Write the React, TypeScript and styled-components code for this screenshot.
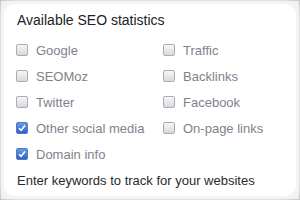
import React from 'react'
import styled, { createGlobalStyle } from 'styled-components'

const GlobalStyle = createGlobalStyle`
  html, body {
    margin: 0;
    padding: 0;
    background: #fff;
  }
  body {
    font-family: "Liberation Sans", Arial, sans-serif;
  }
`

const options = [
  { label: 'Google', checked: false },
  { label: 'Traffic', checked: false },
  { label: 'SEOMoz', checked: false },
  { label: 'Backlinks', checked: false },
  { label: 'Twitter', checked: false },
  { label: 'Facebook', checked: false },
  { label: 'Other social media', checked: true },
  { label: 'On-page links', checked: false },
  { label: 'Domain info', checked: true },
]

const App: React.FC = () => {
  return (
    <>
      <GlobalStyle />
      <StyledFrame>
        <StyledPanel>
          <StyledTitle>Available SEO statistics</StyledTitle>
          <StyledGrid>
            {options.map(opt => (
              <StyledOption key={opt.label}>
                <StyledBox checked={opt.checked}>
                  {opt.checked && (
                    <svg width="8" height="8" viewBox="0 0 8 8">
                      <path
                        d="M1 4.2 L3.1 6.3 L7 1.5"
                        fill="none"
                        stroke="#fff"
                        strokeWidth="1.6"
                      />
                    </svg>
                  )}
                </StyledBox>
                <StyledLabel>{opt.label}</StyledLabel>
              </StyledOption>
            ))}
          </StyledGrid>
          <StyledFooter>Enter keywords to track for your websites</StyledFooter>
        </StyledPanel>
      </StyledFrame>
    </>
  )
}

const StyledFrame = styled.div`
  box-sizing: border-box;
  width: 300px;
  height: 200px;
  border: 1px solid #c2c2c2;
  background: #ededed;
  padding: 3px;
`

const StyledPanel = styled.div`
  box-sizing: border-box;
  height: 100%;
  background: #fff;
  border-radius: 12px;
  box-shadow: 0 0 10px 4px #f7f7f7;
  padding: 6px 0 0 12px;
`

const StyledTitle = styled.div`
  font-size: 14px;
  line-height: 20px;
  color: #222;
  margin-left: 1px;
`

const StyledGrid = styled.div`
  display: grid;
  grid-template-columns: 147px 1fr;
  grid-auto-rows: 26px;
  margin-top: 7px;
`

const StyledOption = styled.div`
  display: flex;
  align-items: center;
`

const StyledBox = styled.span<{ checked: boolean }>`
  box-sizing: border-box;
  width: 12px;
  height: 12px;
  border-radius: 2px;
  display: flex;
  align-items: center;
  justify-content: center;
  border: 1px solid ${props => (props.checked ? '#4c78c4' : '#a9acb2')};
  background: ${props =>
    props.checked
      ? 'linear-gradient(#6b9ae4, #2f62c6)'
      : 'linear-gradient(#f6f6f6, #d8d9dd)'};
  margin-right: 8px;
`

const StyledLabel = styled.span`
  font-size: 13px;
  color: #7e828b;
`

const StyledFooter = styled.div`
  font-size: 13px;
  line-height: 20px;
  color: #2a2a2a;
  margin-top: 4px;
  margin-left: 1px;
`

export default App
